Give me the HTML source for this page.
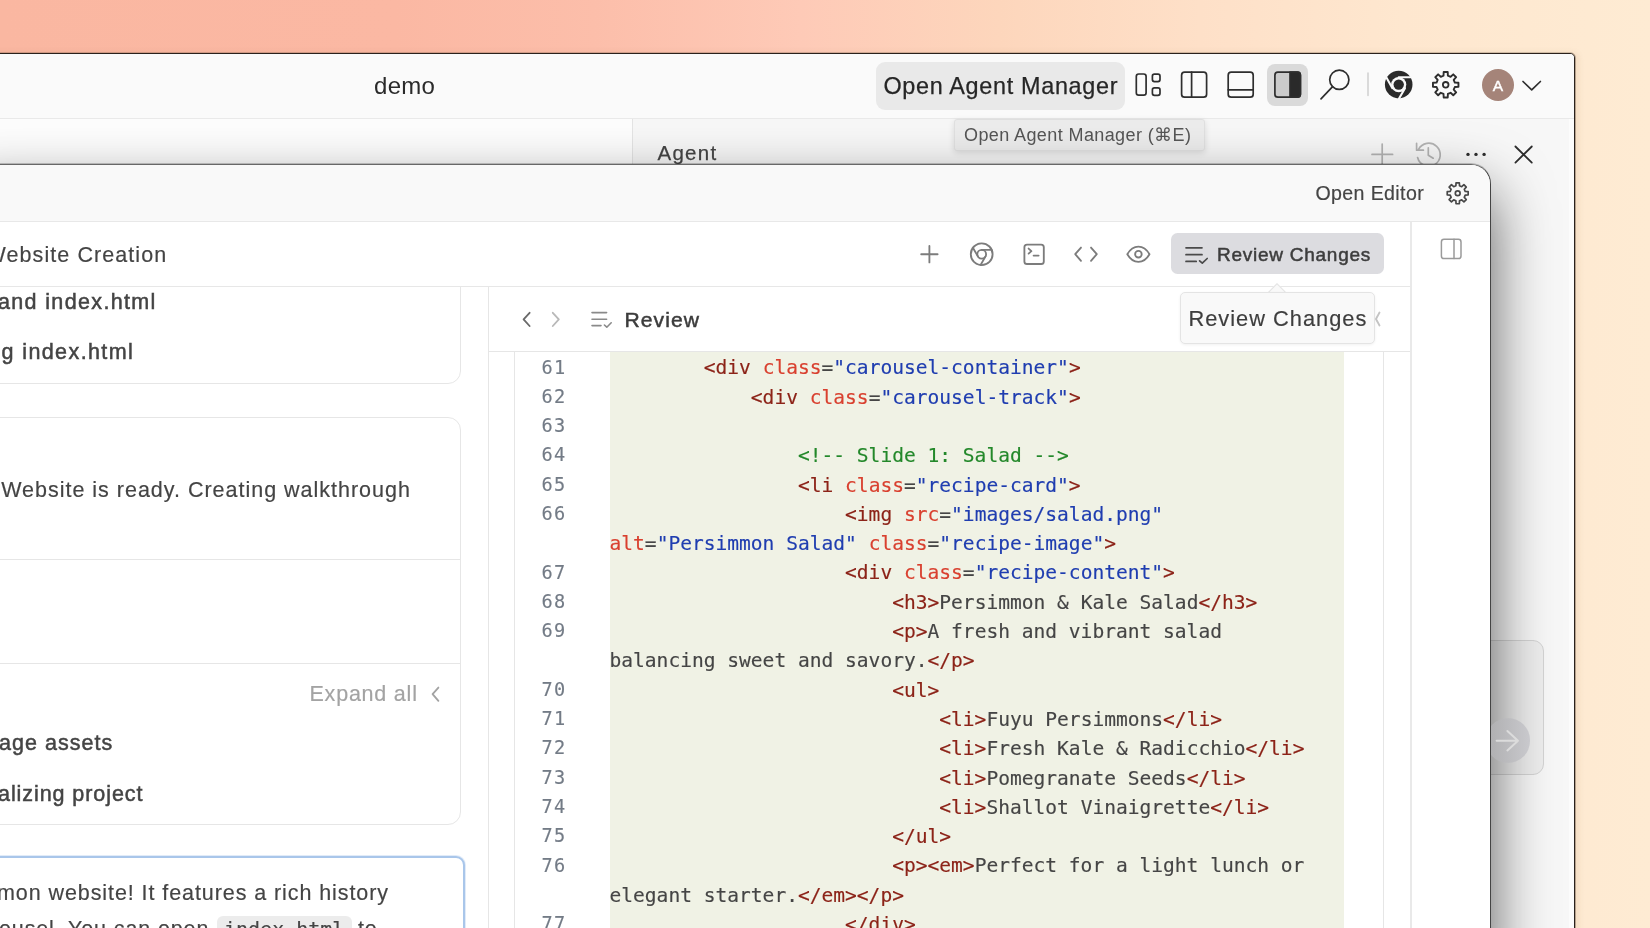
<!DOCTYPE html>
<html lang="en">
<head>
<meta charset="utf-8">
<title>demo</title>
<style>
*{box-sizing:border-box;margin:0;padding:0}
html,body{width:1650px;height:928px;overflow:hidden}
body{position:relative;font-family:"Liberation Sans",sans-serif;color:#444;
 background:linear-gradient(90deg,#fab7a1 0%,#fbb8a3 24%,#fcbeaa 36%,#fecab7 48.5%,#fdd6bc 60.6%,#fee0c8 72.7%,#fee7cf 85%,#feebd3 100%);}
.abs{position:absolute}
.t{position:absolute;white-space:pre;line-height:1}
svg{position:absolute;overflow:visible}
/* back window */
#back{position:absolute;left:-20px;top:53px;width:1595px;height:900px;background:#f8f8f8;border:1px solid #2a211c;border-radius:0 5px 0 0;overflow:hidden;will-change:transform;box-shadow:1px 0 0 rgba(90,70,55,.4),0 -1px 0 rgba(90,70,55,.25),3px 0 6px rgba(120,80,40,.10)}
#back .titlebar{position:absolute;left:0;top:0;width:100%;height:65px;background:#fafafa;border-bottom:1px solid #e9e9e9}

.pg{position:absolute}
#back .pg{left:19px;top:-54px}
#front .pg{left:39px;top:-165px}
#oam{left:876px;top:62px;width:249px;height:48px;border-radius:9px;background:#e9e9e9}
#tabL{left:-19px;top:119px;width:652px;height:60px;background:#fdfdfd;border-right:1px solid #e4e4e4}
#tabR{left:633px;top:119px;width:960px;height:900px;background:#f7f7f7}
#tip1{left:954px;top:119px;width:250.5px;height:32px;background:#ececec;border:1px solid #e0e0e0;border-radius:3px;box-shadow:0 2px 6px rgba(0,0,0,.12)}
#actbg{left:1267px;top:64px;width:41px;height:42px;border-radius:8px;background:#dadada}
#avatar{left:1482px;top:69px;width:32px;height:32px;border-radius:50%;background:#a58479}
#inputbox{left:1400px;top:640px;width:144px;height:135px;border-radius:11px;background:#eeeeee;border:1px solid #d4d4d4}
/* front window */
#shadow{position:absolute;left:-40px;top:164px;width:1531px;height:800px;border-radius:0 20px 0 0;box-shadow:0 27px 60px rgba(0,0,0,.64)}
#front{position:absolute;left:-40px;top:164px;width:1531px;height:800px;background:#fff;border:1px solid #686868;border-right-color:#444;will-change:transform;box-shadow:0 -1px 0 rgba(0,0,0,.2);border-radius:0 20px 0 0;overflow:hidden}

#front .hdr{left:-39px;top:165px;width:1531px;height:57px;background:#f9f9f9;border-bottom:1px solid #e8e8e8}
#front .tb{left:-39px;top:222px;width:1449px;height:65px;background:#fff;border-bottom:1px solid #e7e7e7}
#front .sb{left:1410px;top:222px;width:90px;height:760px;background:#fff}
.vline{position:absolute;width:1px;background:#e6e6e6}
.hline{position:absolute;height:1px;background:#e6e6e6}
.card{position:absolute;background:#fff;border:1px solid #e6e6e6;border-radius:13px}
#rcbtn{left:1171px;top:233px;width:213px;height:41px;border-radius:6.5px;background:#dcdce0}
#tip2{left:1180px;top:292px;width:195px;height:52px;border-radius:5px;background:#f9f9f9;border:1px solid #e4e4e4;box-shadow:0 1px 3px rgba(0,0,0,.06)}
#tip2a{left:1270px;top:286px;width:14px;height:14px;background:#f9f9f9;border:1px solid #e4e4e4;transform:rotate(45deg)}
#green{left:609.5px;top:352px;width:734px;height:600px;background:#f0f2e5}
.ln{position:absolute;left:520px;width:46.4px;text-align:right;font-family:"DejaVu Sans Mono","Liberation Mono",monospace;font-size:18.6px;letter-spacing:1.2px;line-height:29.3px;height:29.3px;color:#737b86;white-space:pre}
.cl{position:absolute;left:609.5px;font-family:"DejaVu Sans Mono","Liberation Mono",monospace;font-size:19.57px;line-height:29.3px;height:29.3px;color:#454545;white-space:pre}
.tg{color:#8c2318}.at{color:#d9402f}.st{color:#1f3db0}.cm{color:#23882a}
.med{-webkit-text-stroke:.5px currentColor}
#front .t{-webkit-text-stroke:.18px currentColor}
#front .t.med{-webkit-text-stroke:.5px currentColor}
.cl,.ln{-webkit-text-stroke:.15px currentColor}
#card3{left:-30px;top:856px;width:495px;height:120px;border:2px solid #a9c6ea;border-radius:9px;background:#fff;box-shadow:0 0 0 1px rgba(169,198,234,.35)}
#icode{left:217px;top:916px;width:135px;height:30px;border-radius:6px;background:#ececec}
</style>
</head>
<body>
<div id="back">
  <div class="titlebar"></div>
  <div class="pg">
    <div class="abs" id="tabR"></div>
    <div class="abs" id="tabL"></div>
    <div class="abs" style="left:1569px;top:119px;width:5px;height:820px;background:#fcfcfc"></div>
    <div class="t" style="left:374px;top:74px;font-size:24px;letter-spacing:.3px;color:#2a2a2a">demo</div>
    <div class="abs" id="oam"></div>
    <div class="t" style="left:883.5px;top:74.9px;font-size:23.4px;letter-spacing:.68px;color:#262626;-webkit-text-stroke:.25px #262626">Open Agent Manager</div>
    <div class="abs" id="actbg"></div>
    <div class="abs" id="avatar"></div>
    <div class="t" style="left:1492.7px;top:77.6px;font-size:15.5px;color:#fff;-webkit-text-stroke:.4px #fff">A</div>
    <div class="abs" id="tip1"></div>
    <div class="t" style="left:964px;top:126px;font-size:18px;letter-spacing:.4px;color:#555;font-family:'Liberation Sans','DejaVu Sans',sans-serif">Open Agent Manager (&#8984;E)</div>
    <div class="t" style="left:657.5px;top:143.4px;font-size:20.5px;letter-spacing:1.25px;color:#454545;-webkit-text-stroke:.25px #454545">Agent</div>
    <div class="abs" id="inputbox"></div>
    <svg width="1650" height="928" viewBox="0 0 1650 928" style="left:0;top:0" fill="none" stroke="#2e2e2e" stroke-width="1.7" stroke-linecap="round" stroke-linejoin="round">
      <!-- layout -->
      <rect x="1136.3" y="74" width="9.8" height="21.2" rx="2.4"/>
      <rect x="1152.4" y="74.2" width="7.6" height="7.4" rx="2"/>
      <rect x="1152.4" y="87.9" width="7.6" height="7.4" rx="2"/>
      <!-- sidebar left -->
      <rect x="1181.6" y="72.2" width="25" height="25" rx="3"/>
      <path d="M1191.6 72.2V97.2"/>
      <!-- panel bottom -->
      <rect x="1228.2" y="72.2" width="25" height="25" rx="3"/>
      <path d="M1228.2 89.8H1253.2"/>
      <!-- sidebar right (active) -->
      <rect x="1274.9" y="72.2" width="25.5" height="25" rx="3" fill="#cbcbcb"/>
      <path d="M1290 72.2H1297.4a3 3 0 0 1 3 3V94.2a3 3 0 0 1-3 3H1290Z" fill="#2a2a2a"/>
      <!-- search -->
      <circle cx="1339.3" cy="79.8" r="9.6"/>
      <path d="M1332.6 86.7L1321 98.8"/>
      <!-- separator -->
      <path d="M1368 73V95.5" stroke="#cfcfcf" stroke-width="1.5"/>
      <!-- chrome filled -->
      <g stroke="none">
        <circle cx="1398.7" cy="84.6" r="13.8" fill="#2a2a2a"/>
        <circle cx="1398.7" cy="84.6" r="7.6" fill="#f9f9f9"/>
        <circle cx="1398.7" cy="84.6" r="5.2" fill="#2a2a2a"/>
      </g>
      <g stroke="#f9f9f9" stroke-width="2.1">
        <path d="M1398.7 77.3H1411"/>
        <path d="M1392.4 88.2L1386.4 77.6"/>
        <path d="M1405 88.2L1398.9 98.8"/>
      </g>
      <!-- gear -->
      <path d="M1443.51 75.66 L1443.68 72.06 L1447.72 72.06 L1447.89 75.66 L1450.61 76.79 L1453.28 74.36 L1456.14 77.22 L1453.71 79.89 L1454.84 82.61 L1458.44 82.78 L1458.44 86.82 L1454.84 86.99 L1453.71 89.71 L1456.14 92.38 L1453.28 95.24 L1450.61 92.81 L1447.89 93.94 L1447.72 97.54 L1443.68 97.54 L1443.51 93.94 L1440.79 92.81 L1438.12 95.24 L1435.26 92.38 L1437.69 89.71 L1436.56 86.99 L1432.96 86.82 L1432.96 82.78 L1436.56 82.61 L1437.69 79.89 L1435.26 77.22 L1438.12 74.36 L1440.79 76.79Z" stroke-width="1.9"/>
      <circle cx="1445.7" cy="84.8" r="2.8" stroke-width="1.8"/>
      <!-- chevron -->
      <path d="M1523 81.5L1531.7 89.8L1540.4 81.5"/>
      <!-- tab row icons -->
      <g stroke="#b3b3b3">
        <path d="M1372 154.4H1392.6M1382.2 144V170"/>
        <path d="M1418.5 149.5A11.5 11.5 0 1 1 1417.6 157.5"/>
        <path d="M1416.6 143.4V150.2H1423.4"/>
        <path d="M1428.3 147.8V155.2L1433.2 158.2"/>
      </g>
      <g fill="#2e2e2e" stroke="none"><circle cx="1468" cy="154.4" r="1.7"/><circle cx="1476" cy="154.4" r="1.7"/><circle cx="1484.1" cy="154.4" r="1.7"/></g>
      <path d="M1515.4 146.5L1531.8 162.6M1531.8 146.5L1515.4 162.6" stroke-width="1.8"/>
    </svg>
  </div>
</div>
<div id="shadow"></div>
<div id="send" style="position:absolute;left:1485.7px;top:718.4px;width:44.6px;height:44.6px;border-radius:50%;background:linear-gradient(90deg,#adadaf 0%,#b3b3b5 20%,#c9c9cd 100%)"></div>
<svg width="1650" height="928" viewBox="0 0 1650 928" style="left:0;top:0" fill="none" stroke="#dcdcdc" stroke-width="2" stroke-linecap="round" stroke-linejoin="round"><path d="M1496.6 740.7H1517.6M1507.4 731L1518 740.7L1507.4 750.4"/></svg>
<div id="front">
  <div class="pg">
    <!-- left chat panel -->
    <div class="card" style="left:-30px;top:200px;width:491px;height:184px"></div>
    <div class="t med" style="left:-2px;top:292.0px;font-size:21.5px;letter-spacing:1.35px">and index.html</div>
    <div class="t med" style="left:1.5px;top:342.0px;font-size:21.5px;letter-spacing:1.4px">g index.html</div>
    <div class="card" style="left:-30px;top:417px;width:491px;height:408px"></div>
    <div class="t" style="left:1.2px;top:480.2px;font-size:21.5px;letter-spacing:.99px">Website is ready. Creating walkthrough</div>
    <div class="hline" style="left:-30px;top:558.5px;width:490px"></div>
    <div class="hline" style="left:-30px;top:663px;width:490px"></div>
    <div class="t" style="left:309.5px;top:684.4px;font-size:21.5px;letter-spacing:.78px;color:#a3a3a3">Expand all</div>
    <div class="t med" style="left:-1px;top:732.7px;font-size:21.5px;letter-spacing:1.03px">age assets</div>
    <div class="t med" style="left:-2px;top:784.4px;font-size:21.5px;letter-spacing:.93px">alizing project</div>
    <div class="abs" id="card3"></div>
    <div class="t" style="left:-3px;top:882.7px;font-size:21.5px;letter-spacing:.92px">mon website! It features a rich history</div>
    <div class="abs" id="icode"></div>
    <div class="t" style="left:-1px;top:918.7px;font-size:21.5px;letter-spacing:.87px">ousel. You can open</div>
    <div class="t" style="left:224px;top:919px;font-size:20px;font-family:'DejaVu Sans Mono','Liberation Mono',monospace">index.html</div>
    <div class="t" style="left:358px;top:918.7px;font-size:21.5px;letter-spacing:.87px">to</div>
    <div class="vline" style="left:488px;top:287px;height:700px"></div>
    <!-- review panel -->
    <div class="hline" style="left:489px;top:351px;width:921px"></div>
    <div class="t med" style="left:624.5px;top:309.2px;font-size:21.1px;letter-spacing:1.05px;color:#3c3c3c">Review</div>
    <div class="abs" id="green"></div>
    <div class="vline" style="left:514px;top:352px;height:600px"></div>
    <div class="vline" style="left:1383px;top:352px;height:600px"></div>
    <div class="ln" style="top:352.5px">61</div>
    <div class="cl" style="top:353.3px">        <span class="tg">&lt;div</span> <span class="at">class</span>=<span class="st">"carousel-container"</span><span class="tg">&gt;</span></div>
    <div class="ln" style="top:381.8px">62</div>
    <div class="cl" style="top:382.6px">            <span class="tg">&lt;div</span> <span class="at">class</span>=<span class="st">"carousel-track"</span><span class="tg">&gt;</span></div>
    <div class="ln" style="top:411.1px">63</div>
    <div class="ln" style="top:440.4px">64</div>
    <div class="cl" style="top:441.2px">                <span class="cm">&lt;!-- Slide 1: Salad --&gt;</span></div>
    <div class="ln" style="top:469.7px">65</div>
    <div class="cl" style="top:470.5px">                <span class="tg">&lt;li</span> <span class="at">class</span>=<span class="st">"recipe-card"</span><span class="tg">&gt;</span></div>
    <div class="ln" style="top:499.0px">66</div>
    <div class="cl" style="top:499.8px">                    <span class="tg">&lt;img</span> <span class="at">src</span>=<span class="st">"images/salad.png"</span></div>
    <div class="cl" style="top:529.1px"><span class="at">alt</span>=<span class="st">"Persimmon Salad"</span> <span class="at">class</span>=<span class="st">"recipe-image"</span><span class="tg">&gt;</span></div>
    <div class="ln" style="top:557.6px">67</div>
    <div class="cl" style="top:558.4px">                    <span class="tg">&lt;div</span> <span class="at">class</span>=<span class="st">"recipe-content"</span><span class="tg">&gt;</span></div>
    <div class="ln" style="top:586.9px">68</div>
    <div class="cl" style="top:587.7px">                        <span class="tg">&lt;h3&gt;</span>Persimmon &amp; Kale Salad<span class="tg">&lt;/h3&gt;</span></div>
    <div class="ln" style="top:616.2px">69</div>
    <div class="cl" style="top:617.0px">                        <span class="tg">&lt;p&gt;</span>A fresh and vibrant salad</div>
    <div class="cl" style="top:646.3px">balancing sweet and savory.<span class="tg">&lt;/p&gt;</span></div>
    <div class="ln" style="top:674.8px">70</div>
    <div class="cl" style="top:675.6px">                        <span class="tg">&lt;ul&gt;</span></div>
    <div class="ln" style="top:704.1px">71</div>
    <div class="cl" style="top:704.9px">                            <span class="tg">&lt;li&gt;</span>Fuyu Persimmons<span class="tg">&lt;/li&gt;</span></div>
    <div class="ln" style="top:733.4px">72</div>
    <div class="cl" style="top:734.2px">                            <span class="tg">&lt;li&gt;</span>Fresh Kale &amp; Radicchio<span class="tg">&lt;/li&gt;</span></div>
    <div class="ln" style="top:762.7px">73</div>
    <div class="cl" style="top:763.5px">                            <span class="tg">&lt;li&gt;</span>Pomegranate Seeds<span class="tg">&lt;/li&gt;</span></div>
    <div class="ln" style="top:792.0px">74</div>
    <div class="cl" style="top:792.8px">                            <span class="tg">&lt;li&gt;</span>Shallot Vinaigrette<span class="tg">&lt;/li&gt;</span></div>
    <div class="ln" style="top:821.3px">75</div>
    <div class="cl" style="top:822.1px">                        <span class="tg">&lt;/ul&gt;</span></div>
    <div class="ln" style="top:850.6px">76</div>
    <div class="cl" style="top:851.4px">                        <span class="tg">&lt;p&gt;&lt;em&gt;</span>Perfect for a light lunch or</div>
    <div class="cl" style="top:880.7px">elegant starter.<span class="tg">&lt;/em&gt;&lt;/p&gt;</span></div>
    <div class="ln" style="top:909.2px">77</div>
    <div class="cl" style="top:910.0px">                    <span class="tg">&lt;/div&gt;</span></div>
    <!-- header + toolbar -->
    <div class="abs hdr"></div>
    <div class="abs tb"></div>
    <div class="abs sb"></div>
    <div class="t" style="left:1315.5px;top:184.2px;font-size:19.6px;letter-spacing:.36px;color:#454545">Open Editor</div>
    <div class="t" style="left:-14.5px;top:245.0px;font-size:21.5px;letter-spacing:1.08px;color:#444">Website Creation</div>
    <div class="abs" id="rcbtn"></div>
    <div class="t med" style="left:1217px;top:244.8px;font-size:19px;letter-spacing:.74px;color:#3d3d3d">Review Changes</div>
    <div class="vline" style="left:1410px;top:222px;height:760px;width:2px;background:#e9e9e9"></div>
    <svg width="1650" height="928" viewBox="0 0 1650 928" style="left:0;top:0" fill="none" stroke="#7c7c7c" stroke-width="1.85" stroke-linecap="round" stroke-linejoin="round">
      <!-- header gear -->
      <g stroke="#484848" stroke-width="1.7"><path d="M1455.90 185.81 L1456.04 182.83 L1459.36 182.83 L1459.50 185.81 L1461.72 186.73 L1463.93 184.72 L1466.28 187.07 L1464.27 189.28 L1465.19 191.50 L1468.17 191.64 L1468.17 194.96 L1465.19 195.10 L1464.27 197.32 L1466.28 199.53 L1463.93 201.88 L1461.72 199.87 L1459.50 200.79 L1459.36 203.77 L1456.04 203.77 L1455.90 200.79 L1453.68 199.87 L1451.47 201.88 L1449.12 199.53 L1451.13 197.32 L1450.21 195.10 L1447.23 194.96 L1447.23 191.64 L1450.21 191.50 L1451.13 189.28 L1449.12 187.07 L1451.47 184.72 L1453.68 186.73Z"/><circle cx="1457.7" cy="193.3" r="2.4"/></g>
      <!-- plus -->
      <path d="M921.2 254.2H937.6M929.4 246V262.4"/>
      <!-- chrome outline -->
      <circle cx="981.7" cy="254.2" r="10.9"/>
      <circle cx="981.7" cy="254.2" r="4.4"/>
      <path d="M981.7 249.8H991.6M977.9 256.4L972.9 247.8M985.5 256.4L980.6 265"/>
      <!-- terminal -->
      <rect x="1024.4" y="244.6" width="19.4" height="19.4" rx="2.6"/>
      <path d="M1028.6 248.6L1031.4 251.1L1028.6 253.6M1033.6 255.6H1038.6"/>
      <!-- code -->
      <path d="M1081 247.6L1075.2 254.2L1081 260.8M1091 247.6L1096.8 254.2L1091 260.8"/>
      <!-- eye -->
      <path d="M1127.3 254.2C1130.3 249 1134 246.6 1138.4 246.6C1142.8 246.6 1146.5 249 1149.5 254.2C1146.5 259.4 1142.8 261.8 1138.4 261.8C1134 261.8 1130.3 259.4 1127.3 254.2Z"/>
      <circle cx="1138.4" cy="254.2" r="3.3"/>
      <!-- review btn icon -->
      <g stroke="#4a4a4a" stroke-width="1.7"><path d="M1186 247.8H1202M1186 254.7H1202M1186 261.4H1196.2M1199.6 260.8L1202.3 263.2L1207.2 258.5"/></g>
      <!-- sidebar icon -->
      <g stroke="#9a9a9a" stroke-width="1.5"><rect x="1441.4" y="239.3" width="19.6" height="19.2" rx="2.6"/><path d="M1454 239.3V258.5"/></g>
      <!-- review header nav -->
      <path d="M529.6 312.8L523.6 319.4L529.6 326" stroke="#6a6a6a"/>
      <path d="M552.8 312.8L558.8 319.4L552.8 326" stroke="#b9b9b9"/>
      <g stroke="#8a8a8a" stroke-width="1.6"><path d="M592 312.6H606.6M592 319.2H606.6M592 325.6H601M604.4 325L606.8 327.2L611.2 322.8"/></g>
      <!-- hidden chevron next to tooltip -->
      <path d="M1379.5 312.5L1376 319L1379.5 325.5" stroke="#c4c4c4"/>
      <!-- expand all chevron -->
      <path d="M438.4 687.6L432.6 694.2L438.4 700.8" stroke="#a3a3a3"/>
    </svg>
    <div class="abs" id="tip2a"></div>
    <div class="abs" id="tip2"></div>
    <div class="t" style="left:1188.5px;top:307.8px;font-size:21.8px;letter-spacing:1px;color:#3e3e3e">Review Changes</div>
  </div>
</div>
</body>
</html>
